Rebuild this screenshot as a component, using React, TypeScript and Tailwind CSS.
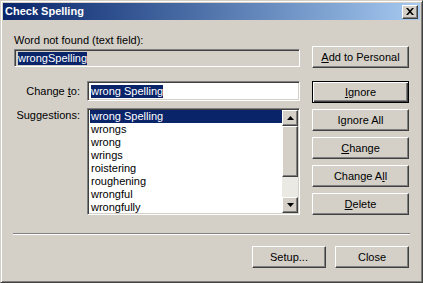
import React from "react";

const raised =
  "border border-t-white border-l-white border-r-[#404040] border-b-[#404040] shadow-[inset_-1px_-1px_0_#808080,inset_1px_1px_0_#d4d0c8] bg-[#d4d0c8]";
const sunken =
  "border border-t-[#808080] border-l-[#808080] border-r-white border-b-white shadow-[inset_1px_1px_0_#404040,inset_-1px_-1px_0_#d4d0c8]";

interface BtnProps {
  children: React.ReactNode;
  w?: string;
  isDefault?: boolean;
}

const Btn: React.FC<BtnProps> = ({ children, w = "w-[97px]", isDefault }) => (
  <div
    className={
      isDefault
        ? `${w} h-[22px] flex items-center justify-center bg-[#d4d0c8] border border-black shadow-[inset_1px_1px_0_#fff,inset_-1px_-1px_0_#404040,inset_-2px_-2px_0_#808080]`
        : `${w} h-[22px] flex items-center justify-center ${raised}`
    }
  >
    <span className="leading-[13px]">{children}</span>
  </div>
);

const Arrow: React.FC<{ up?: boolean }> = ({ up }) => (
  <div className={`w-[16px] h-[16px] shrink-0 flex items-center justify-center ${raised}`}>
    <svg width="7" height="4" viewBox="0 0 7 4">
      {up ? <path d="M3.5 0L7 4H0z" fill="#000" /> : <path d="M0 0h7L3.5 4z" fill="#000" />}
    </svg>
  </div>
);

const suggestions = [
  "wrong Spelling",
  "wrongs",
  "wrong",
  "wrings",
  "roistering",
  "roughening",
  "wrongful",
  "wrongfully",
];

export default function App() {
  return (
    <div
      className="w-[423px] h-[283px] bg-[#d4d0c8] border border-t-[#d4d0c8] border-l-[#d4d0c8] border-r-[#404040] border-b-[#404040] shadow-[inset_1px_1px_0_#fff,inset_-1px_-1px_0_#808080] p-[2px] flex flex-col text-[11px] text-black"
      style={{ fontFamily: '"Liberation Sans", Arial, sans-serif' }}
    >
      {/* title bar */}
      <div className="h-[17px] bg-gradient-to-r from-[#0a246a] to-[#a6caf0] flex items-center justify-between pl-[2px] pr-[2px]">
        <span className="text-white font-bold text-[11px] leading-[13px]">Check Spelling</span>
        <div className={`w-[16px] h-[14px] flex items-center justify-center ${raised}`}>
          <svg width="8" height="7" viewBox="0 0 8 7">
            <path d="M0 0h2l2 2.3L6 0h2L5 3.5 8 7H6L4 4.7 2 7H0l3-3.5z" fill="#000" />
          </svg>
        </div>
      </div>

      {/* body */}
      <div className="flex pl-[11px] gap-[12px]">
        <div className="w-[286px] flex flex-col">
          <div className="mt-[14px] h-[13px] leading-[13px]">Word not found (text field):</div>
          <div className={`mt-[2px] h-[18px] ${sunken} bg-[#d4d0c8] flex items-center pl-[3px]`}>
            <span className="bg-[#0a246a] text-white leading-[13px]">wrongSpelling</span>
          </div>

          <div className="mt-[14px] flex gap-[7px]">
            <div className="w-[66px] h-[20px] flex items-center justify-end leading-[13px]">
              Change <u className="ml-[3px]">t</u>o:
            </div>
            <div className={`w-[213px] h-[20px] ${sunken} bg-white flex items-center pl-[3px]`}>
              <span className="bg-[#0a246a] text-white leading-[13px]">wrong Spelling</span>
            </div>
          </div>

          <div className="mt-[7px] flex gap-[7px]">
            <div className="w-[66px] text-right pt-[1px] leading-[13px]">Suggestions:</div>
            <div className={`w-[213px] h-[107px] ${sunken} bg-white pt-[1px] pl-[2px] pr-[1px] pb-0 flex`}>
              <div className="flex-1 flex flex-col overflow-hidden">
                {suggestions.map((s, i) => (
                  <div
                    key={s}
                    className={`h-[13px] leading-[13px] pl-[1px] shrink-0 ${i === 0 ? "bg-[#0a246a] text-white" : ""}`}
                  >
                    {s}
                  </div>
                ))}
              </div>
              <div className="w-[16px] flex flex-col bg-[#ebe9e4] mb-[1px]">
                <Arrow up />
                <div className={`h-[51px] shrink-0 ${raised}`} />
                <div className="flex-1" />
                <Arrow />
              </div>
            </div>
          </div>
        </div>

        <div className="w-[97px] flex flex-col">
          <div className="mt-[26px]">
            <Btn>
              <u>A</u>dd to Personal
            </Btn>
          </div>
          <div className="mt-[13px] flex flex-col gap-[6px]">
            <Btn isDefault>
              <u>I</u>gnore
            </Btn>
            <Btn>
              I<u>g</u>nore All
            </Btn>
            <Btn>
              <u>C</u>hange
            </Btn>
            <Btn>
              Change A<u>l</u>l
            </Btn>
            <Btn>
              <u>D</u>elete
            </Btn>
          </div>
        </div>
      </div>

      {/* separator */}
      <div className="mt-[18px] ml-[10px] mr-[10px] h-[2px] border-t border-t-[#808080] border-b border-b-white" />

      {/* bottom buttons */}
      <div className="mt-[11px] flex justify-end gap-[9px] pr-[11px]">
        <Btn w="w-[74px]">Setup...</Btn>
        <Btn w="w-[74px]">Close</Btn>
      </div>
    </div>
  );
}
